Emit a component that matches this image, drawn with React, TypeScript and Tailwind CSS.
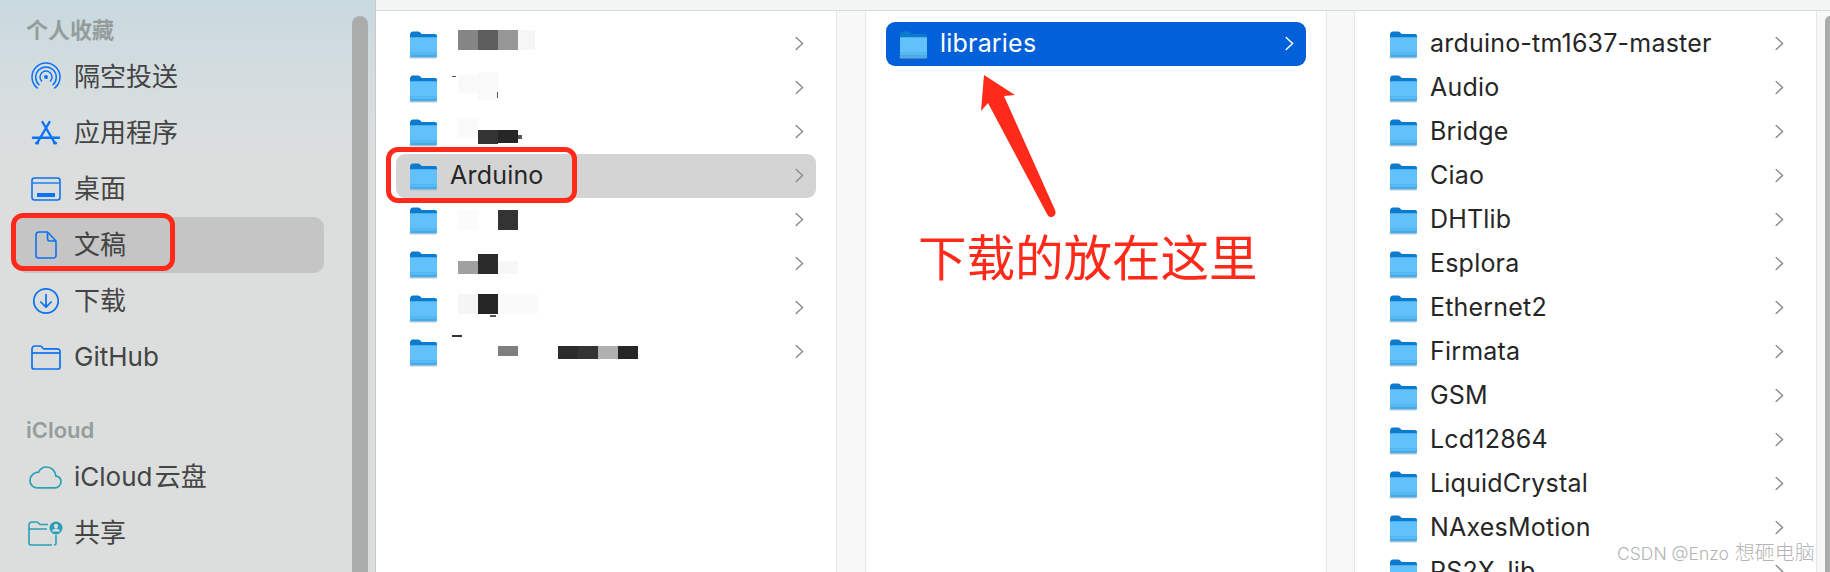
const cjk = '"Noto Sans CJK SC", sans-serif';

type Patch = { x: number; y: number; w: number; h: number; color: string };

interface Entry {
  name: string;
  patches?: Patch[];
  active?: boolean;
}

function FolderIcon() {
  return (
    <svg width="30" height="29" viewBox="0 0 30 29" className="shrink-0">
      <path d="M2 5.5C2 3 3 1.5 5 1.5h5.5c1.6 0 2.4 2.6 4 2.6H27c1.2 0 2 .8 2 2V12H2z" fill="#0b7bcd" />
      <rect x="1.5" y="26" width="27.5" height="2.5" rx="1.2" fill="#b4b8bc" opacity="0.7" />
      <path d="M2 8.2c0-.6.4-1 1-1h25c.6 0 1 .4 1 1v17.3c0 1-.8 1.8-1.800 1.800H3.800C2.800 27.300 2 26.500 2 25.500z" fill="#62c1fb" />
      <rect x="2" y="22.300" width="27" height="1" fill="#4db0ee" />
      <path d="M2 24.500h27v1c0 1-.8 1.800-1.800 1.800H3.800C2.800 27.300 2 26.500 2 25.500z" fill="#46ade9" />
    </svg>
  );
}

function Chevron({ color = '#8c8c8c' }: { color?: string }) {
  return (
    <svg width="9" height="15" viewBox="0 0 9 15" fill="none" className="shrink-0 -translate-y-px">
      <path d="M1.200 1.500 7.600 7.500 1.200 13.500" stroke={color} strokeWidth="1.500" strokeLinecap="round" strokeLinejoin="round" />
    </svg>
  );
}

function FileRow({ name, patches, active }: Entry) {
  const bg = active === undefined ? '' : active ? 'bg-[#0260d9] text-white' : 'bg-[#d4d4d4]';
  return (
    <div className={`relative flex h-11 shrink-0 items-center rounded-[9px] pl-3 pr-3 text-[25px] tracking-[0.2px] text-[#262626] ${bg}`}>
      <FolderIcon />
      <span className="ml-3 -mt-0.5 flex-1 whitespace-nowrap leading-none">{name}</span>
      <Chevron color={active ? '#ffffff' : '#8c8c8c'} />
      {/* mosaic over the hidden folder names */}
      {patches?.map((p, i) => (
        <div
          key={i}
          className="absolute"
          style={{ left: p.x, top: p.y, width: p.w, height: p.h, background: p.color }}
        />
      ))}
    </div>
  );
}

const firstColumn: Entry[] = [
  {
    name: '',
    patches: [
      { x: 62, y: 8, w: 20, h: 20, color: '#858585' },
      { x: 82, y: 8, w: 20, h: 20, color: '#5e5e5e' },
      { x: 102, y: 8, w: 20, h: 20, color: '#969696' },
      { x: 122, y: 8, w: 17, h: 20, color: '#f6f6f6' },
    ],
  },
  {
    name: '',
    patches: [
      { x: 62, y: 9, w: 40, h: 18, color: '#f9f9f9' },
      { x: 82, y: 6, w: 20, h: 28, color: '#f9f9f9' },
      { x: 56, y: 10, w: 4, h: 1, color: '#555555' },
      { x: 101, y: 26, w: 1, h: 6, color: '#555555' },
    ],
  },
  {
    name: '',
    patches: [
      { x: 62, y: 8, w: 20, h: 20, color: '#fafafa' },
      { x: 82, y: 20, w: 20, h: 14, color: '#333333' },
      { x: 102, y: 20, w: 20, h: 13, color: '#262626' },
      { x: 122, y: 25, w: 4, h: 4, color: '#555555' },
    ],
  },
  { name: 'Arduino', active: false },
  {
    name: '',
    patches: [
      { x: 62, y: 12, w: 20, h: 20, color: '#fbfbfb' },
      { x: 102, y: 12, w: 20, h: 20, color: '#333333' },
    ],
  },
  {
    name: '',
    patches: [
      { x: 62, y: 19, w: 20, h: 13, color: '#a0a0a0' },
      { x: 82, y: 12, w: 20, h: 20, color: '#2b2b2b' },
      { x: 102, y: 19, w: 20, h: 13, color: '#f7f7f7' },
    ],
  },
  {
    name: '',
    patches: [
      { x: 62, y: 8, w: 20, h: 20, color: '#f5f5f5' },
      { x: 82, y: 8, w: 20, h: 20, color: '#262626' },
      { x: 102, y: 8, w: 40, h: 20, color: '#fafafa' },
      { x: 94, y: 29, w: 6, h: 2, color: '#555555' },
    ],
  },
  {
    name: '',
    patches: [
      { x: 56, y: 5, w: 10, h: 2, color: '#333333' },
      { x: 102, y: 16, w: 20, h: 10, color: '#7f7f7f' },
      { x: 162, y: 16, w: 20, h: 13, color: '#2b2b2b' },
      { x: 182, y: 16, w: 20, h: 13, color: '#333333' },
      { x: 202, y: 16, w: 20, h: 13, color: '#b0b0b0' },
      { x: 222, y: 16, w: 20, h: 13, color: '#262626' },
    ],
  },
];

const thirdColumn = [
  'arduino-tm1637-master',
  'Audio',
  'Bridge',
  'Ciao',
  'DHTlib',
  'Esplora',
  'Ethernet2',
  'Firmata',
  'GSM',
  'Lcd12864',
  'LiquidCrystal',
  'NAxesMotion',
  'PS2X_lib',
];

function AirDropIcon() {
  return (
    <svg width="30" height="30" viewBox="0 0 30 30" fill="none" stroke="#0a72f5">
      <circle cx="15" cy="15" r="2" fill="#0a72f5" stroke="none" />
      <path d="M10.500 19a6 6 0 1 1 9 0" strokeWidth="1.500" strokeLinecap="round" />
      <path d="M8 22.800a10.300 10.300 0 1 1 14 0" strokeWidth="1.500" strokeLinecap="round" />
      <path d="M6.300 26a14 14 0 1 1 17.400 0" strokeWidth="1.500" strokeLinecap="round" />
    </svg>
  );
}

function AppStoreIcon() {
  return (
    <svg width="30" height="28" viewBox="0 0 30 28" fill="none" stroke="#0a72f5" strokeLinecap="round">
      <path d="M11.500 3 23.500 23.500M18.500 3 6.500 23.500" strokeWidth="2.400" />
      <path d="M2 18.800h26" strokeWidth="2.400" />
      <path d="M5.500 24h1M23.500 24h1" strokeWidth="3.200" />
    </svg>
  );
}

function DesktopIcon() {
  return (
    <svg width="30" height="24" viewBox="0 0 30 24" fill="none">
      <rect x="1" y="1" width="28" height="22" rx="2.500" stroke="#0a72f5" strokeWidth="1.600" />
      <path d="M1.500 6h27" stroke="#0a72f5" strokeWidth="1.300" />
      <rect x="6" y="16" width="18" height="4" fill="#0a72f5" />
    </svg>
  );
}

function DocumentIcon() {
  return (
    <svg width="22" height="28" viewBox="0 0 22 28" fill="none" stroke="#0a72f5" strokeWidth="1.600" strokeLinejoin="round">
      <path d="M4 1h8.500L21 10v14.500a2.500 2.500 0 0 1-2.500 2.500H3.500A2.500 2.500 0 0 1 1 24.500V4a3 3 0 0 1 3-3z" />
      <path d="M12.500 1v6.500A2.500 2.500 0 0 0 15 10h6" />
    </svg>
  );
}

function DownloadIcon() {
  return (
    <svg width="28" height="28" viewBox="0 0 28 28" fill="none" stroke="#0a72f5" strokeLinecap="round" strokeLinejoin="round">
      <circle cx="14" cy="14" r="12.200" strokeWidth="1.700" />
      <path d="M14 7.500v12.500M8.800 15 14 20.200 19.200 15" strokeWidth="1.700" />
    </svg>
  );
}

function FolderOutlineIcon() {
  return (
    <svg width="30" height="25" viewBox="0 0 30 25" fill="none" stroke="#0a72f5" strokeWidth="1.700" strokeLinejoin="round">
      <path d="M1 4a3 3 0 0 1 3-3h5.500c1.500 0 2 2.800 3.500 2.800h13.500A2.500 2.500 0 0 1 29 6.300V22a2 2 0 0 1-2 2H3a2 2 0 0 1-2-2z" />
      <path d="M1 8h28" />
    </svg>
  );
}

function CloudIcon() {
  return (
    <svg width="33" height="23" viewBox="0 0 33 23" fill="none" stroke="#2a9fb8" strokeWidth="1.700">
      <path d="M8 21.800h17.500c3.700 0 6.500-2.600 6.500-6 0-3-2.200-5.300-5-5.700C26.400 5 22.500 1 17.500 1 14 1 11 3 9.500 6.200 4.800 6.300 1 10 1 14.500c0 4 3 7.300 7 7.300z" />
    </svg>
  );
}

function SharedFolderIcon() {
  return (
    <svg width="35" height="25" viewBox="0 0 35 25" fill="none">
      <path d="M24 24H3a2 2 0 0 1-2-2V4a3 3 0 0 1 3-3h5c1.500 0 2 2.500 3.500 2.500H20M1 8h18M28 14v8a2 2 0 0 1-2 2" stroke="#2a9fb8" strokeWidth="1.600" />
      <circle cx="28" cy="7" r="6.500" fill="#2a9fb8" />
      <circle cx="28" cy="5" r="2.200" fill="#dcdedd" />
      <path d="M23.800 10.500c.8-2 2.300-3 4.200-3s3.400 1 4.200 3z" fill="#dcdedd" />
    </svg>
  );
}

function SideItem({ icon, label, selected }: { icon: React.ReactNode; label: string; selected?: boolean }) {
  return (
    <div className={`ml-4 mr-7 flex h-14 items-center rounded-[10px] text-[26px] text-[#444444] ${selected ? 'bg-[#c4c5c4]' : ''}`}>
      <span className="flex w-[59px] shrink-0 items-center justify-center">{icon}</span>
      <span className="-ml-px whitespace-nowrap leading-none">{label}</span>
    </div>
  );
}

function SideHeading({ label }: { label: string }) {
  return (
    <div className="flex h-[30px] items-center pl-[26px] text-[22px] font-semibold leading-none text-[#959c9c]">
      {label}
    </div>
  );
}

export default function App() {
  return (
    <div
      className="relative flex h-[572px] w-[1830px] overflow-hidden bg-white"
      style={{ fontFamily: `Inter, ${cjk}` }}
    >
      {/* Sidebar */}
      <aside className="flex w-[376px] shrink-0 border-r border-[#c9c9c9] bg-[linear-gradient(180deg,#c8d9df_0px,#d6dddf_90px,#dcdedd_170px)]">
        <div className="w-[352px] shrink-0 pt-[15px]">
          <SideHeading label="个人收藏" />
          <div className="mt-1">
            <SideItem icon={<AirDropIcon />} label="隔空投送" />
            <SideItem icon={<AppStoreIcon />} label="应用程序" />
            <SideItem icon={<DesktopIcon />} label="桌面" />
            <SideItem icon={<DocumentIcon />} label="文稿" selected />
            <SideItem icon={<DownloadIcon />} label="下载" />
            <SideItem icon={<FolderOutlineIcon />} label="GitHub" />
          </div>
          <div className="mt-[30px]">
            <SideHeading label="iCloud" />
          </div>
          <div className="mt-1">
            <SideItem icon={<CloudIcon />} label={'iCloud\u200a云盘'} />
            <SideItem icon={<SharedFolderIcon />} label="共享" />
          </div>
        </div>
        <div className="mt-4 w-4 rounded-t-lg bg-[#a9acab]" />
      </aside>

      {/* Column browser */}
      <main className="flex min-w-0 flex-1 flex-col">
        <div className="h-[11px] shrink-0 border-b border-[#d9dbda] bg-[#f3f5f4]" />
        <div className="flex min-h-0 flex-1">
          <div className="flex w-[460px] shrink-0 flex-col px-5 pt-[11px]">
            {firstColumn.map((e, i) => (
              <FileRow key={i} {...e} />
            ))}
          </div>
          <div className="w-[30px] shrink-0 border-x border-[#e6e6e6] bg-[#f8f8f8]" />
          <div className="flex w-[460px] shrink-0 flex-col px-5 pt-[11px]">
            <FileRow name="libraries" active />
          </div>
          <div className="w-[29px] shrink-0 border-x border-[#e6e6e6] bg-[#f8f8f8]" />
          <div className="flex w-[461px] shrink-0 flex-col pl-[21px] pr-5 pt-[11px]">
            {thirdColumn.map((name) => (
              <FileRow key={name} name={name} />
            ))}
          </div>
          <div className="flex flex-1 justify-end border-l border-[#e6e6e6] bg-[#f8f8f8]">
            <div className="mt-[5px] w-[5px] rounded-tl-lg bg-[#a9acab]" />
          </div>
        </div>
      </main>

      {/* Annotations drawn on top of the screenshot */}
      <div className="absolute left-[11px] top-[213px] h-[58px] w-[164px] rounded-[12px] border-[5px] border-[#ff2a1a]" />
      <div className="absolute left-[386px] top-[147px] h-[56px] w-[191px] rounded-[12px] border-[5px] border-[#ff2a1a]" />
      <svg className="absolute left-[970px] top-[65px]" width="100" height="165" viewBox="0 0 100 165">
        <path
          d="M14 10 45 30 34 31 85 145C87 150 83 152.500 80.500 152 79 151.800 78 151 77 149L18 38 11 46z"
          fill="#ff2a1a"
        />
      </svg>
      <div
        className="absolute left-[918px] top-[220px] whitespace-nowrap text-[48.5px] leading-[70px] text-[#ff2a1a]"
        style={{ fontFamily: cjk }}
      >
        下载的放在这里
      </div>
      <div className="absolute left-[1617px] top-[542px] whitespace-nowrap text-[17.5px] font-light leading-[22px] text-[#b4b4b4]">
        CSDN @Enzo <span className="ml-[1px] text-[20px]">想砸电脑</span>
      </div>
    </div>
  );
}
